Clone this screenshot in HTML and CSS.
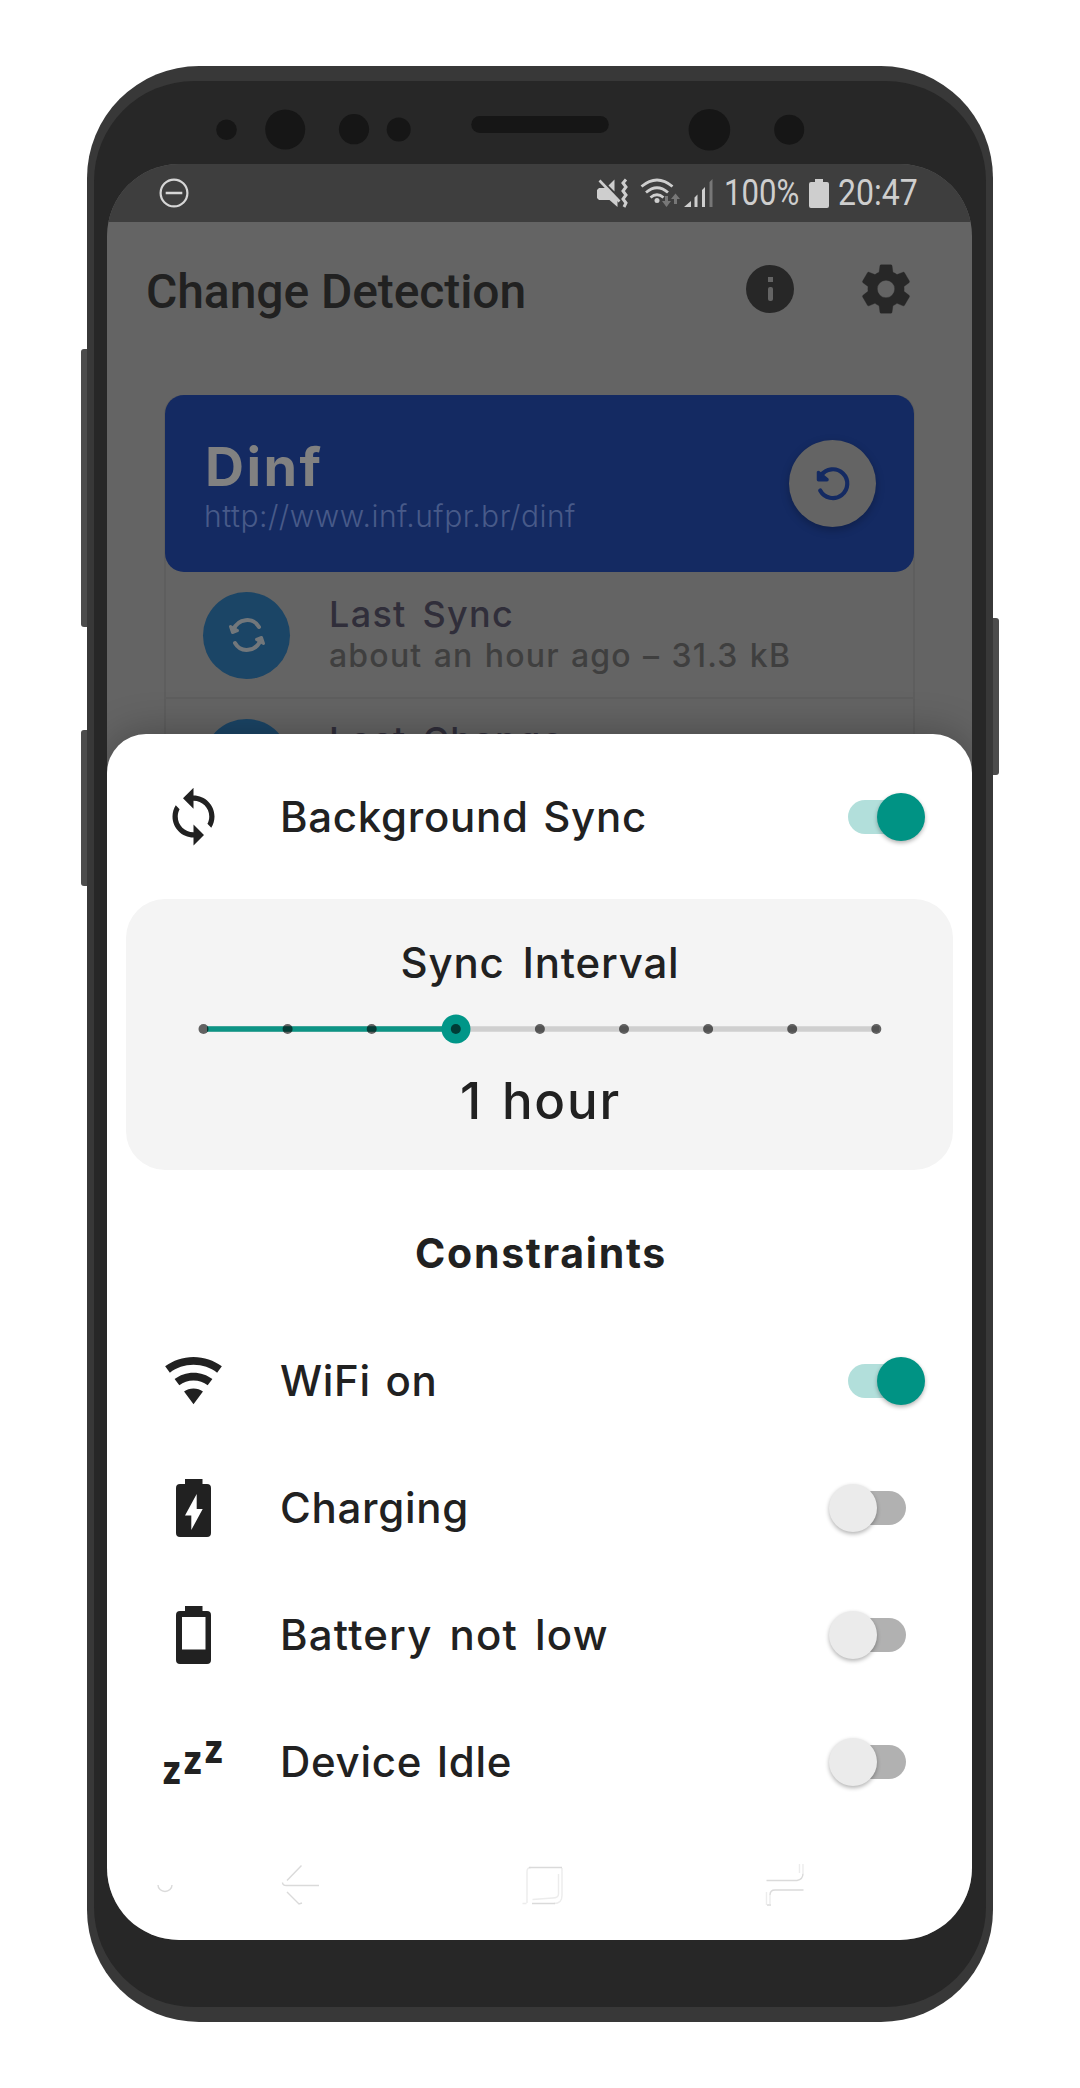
FILE: index.html
```
<!DOCTYPE html>
<html lang="en">
<head>
<meta charset="utf-8">
<title>Change Detection</title>
<link rel="stylesheet" href="styles.css">
</head>
<body>
<div class="phone">
  <i class="side-key volume"></i>
  <i class="side-key assistant"></i>
  <i class="side-key power"></i>
  <div class="bezel">
    <svg class="sensors" width="892" height="83" viewBox="94 81 892 83" fill="#161616">
      <circle cx="226.5" cy="129.7" r="10.3"/><circle cx="285.2" cy="129.5" r="20"/>
      <circle cx="354" cy="129.2" r="15.1"/><circle cx="398.7" cy="129.5" r="12"/>
      <rect x="471.3" y="116" width="137.5" height="17" rx="8.5"/>
      <circle cx="709.4" cy="129.7" r="20.8"/><circle cx="789.2" cy="129.7" r="15"/>
    </svg>
    <div class="screen">
      <header class="status">
        <svg class="dnd" width="30" height="30" viewBox="0 0 30 30" fill="none" stroke="#d6d6d6"><circle cx="15" cy="15" r="13.4" stroke-width="2.2"/><path d="M6.7 15h16.6" stroke-width="2.6"/></svg>
        <svg width="120" height="32" viewBox="0 0 120 32">
          <g fill="#cecece">
            <path d="M1 13l2-2h7L21.500 23v7l-8-7H3l-2-2z"/>
            <path d="M12.500 8.500l6-6v12z"/>
            <path d="M3.500 3.500l20 21" stroke="#cecece" stroke-width="2.600"/>
            <path d="M30 2.500l-3 3.500 3 4-3 4 3 4-3 4 3 4-2 4" fill="none" stroke="#cecece" stroke-width="3"/>
          </g>
          <g fill="none" stroke="#cecece" stroke-width="2.800">
            <path d="M45.500 9.500q15.500-13 31 0"/><path d="M50 15.500q11-9.500 22 0"/><path d="M54.500 20.500q6.500-5.500 13 0"/>
          </g>
          <circle cx="61" cy="23.500" r="2.500" fill="#cecece"/>
          <path d="M69 19v5h-3l4.500 6 4.500-6h-3v-5zM78 27v-5h-3l4.500-5.500 4.500 5.500h-3v5z" fill="#777"/>
          <path d="M88 30l7-6v6zM98.500 20.500l3-3V30h-3zM106 13l3-3v20h-3z" fill="#cecece"/>
          <path d="M113.500 5l3-3v28h-3z" fill="#777"/>
        </svg>
        <span class="percent">100%</span>
        <svg class="cell" width="20" height="29" viewBox="0 0 20 29"><path d="M6 0h8v3h4a2 2 0 0 1 2 2v22a2 2 0 0 1-2 2H2a2 2 0 0 1-2-2V5a2 2 0 0 1 2-2h4z" fill="#cecece"/></svg>
        <span class="clock">20:47</span>
      </header>

      <div class="toolbar">
        <h1>Change Detection</h1>
        <svg width="48" height="48" viewBox="0 0 48 48"><circle cx="24" cy="24" r="24" fill="#272727"/><path d="M22 12h5v5h-5z" fill="#646464"/><rect x="22" y="22" width="5" height="14" rx="2" fill="#646464"/></svg>
        <svg width="58" height="58" viewBox="0 0 24 24" fill="#272727" stroke="#272727" stroke-width=".15"><path fill-rule="evenodd" d="M12 15.600A3.600 3.600 0 0 1 12 8.400a3.600 3.600 0 0 1 0 7.200zM19.430 12.970c.04-.32.07-.64.07-.97s-.03-.66-.07-1l2.110-1.630c.19-.15.24-.42.12-.64l-2-3.460c-.12-.22-.39-.31-.61-.22l-2.490 1c-.52-.39-1.060-.73-1.690-.98l-.37-2.650C14.460 2.180 14.250 2 14 2h-4c-.25 0-.46.18-.5.420l-.37 2.650c-.63.25-1.170.59-1.690.98l-2.490-1c-.22-.09-.49 0-.61.22l-2 3.460c-.13.22-.07.49.12.64L4.570 11c-.04.34-.07.67-.07 1s.03.650.07.970l-2.110 1.660c-.19.15-.25.42-.12.640l2 3.460c.12.22.39.3.61.22l2.490-1.010c.52.4 1.060.74 1.690.99l.37 2.650c.04.24.25.42.5.420h4c.25 0 .46-.18.5-.42l.37-2.650c.63-.26 1.170-.59 1.690-.99l2.490 1.010c.22.080.49 0 .61-.22l2-3.460c.12-.22.07-.49-.12-.64z"/></svg>
      </div>

      <main class="card">
        <section class="site">
          <div>
            <h2>Dinf</h2>
            <p>http://www.inf.ufpr.br/dinf</p>
          </div>
          <button class="reload" aria-label="Reload"><svg width="44" height="44" viewBox="-22 -22 44 44" fill="none" stroke="#142a62" stroke-width="4.200" stroke-linecap="round"><path d="M-12 -8.500A14.400 14.400 0 1 1 -12.800 6.500"/><path d="M-14.500 -11.500v7.200h8.500z" fill="#142a62" stroke-width="3.500" stroke-linejoin="round"/></svg></button>
        </section>
        <section class="entry">
          <span class="badge"><svg width="44" height="44" viewBox="-22 -22 44 44" fill="none" stroke="#72777b" stroke-width="4" stroke-linecap="round"><g><path d="M-13.500 -5.500C-9 -16.500 6 -18.500 12 -8"/><path d="M-16.500 -8.500L-14.500 -2.500L-9.500 -4.500z" fill="#72777b" stroke-width="3" stroke-linejoin="round"/></g><g transform="rotate(180)"><path d="M-13.500 -5.500C-9 -16.500 6 -18.500 12 -8"/><path d="M-16.500 -8.500L-14.500 -2.500L-9.500 -4.500z" fill="#72777b" stroke-width="3" stroke-linejoin="round"/></g></svg></span>
          <div>
            <h3>Last Sync</h3>
            <p>about an hour ago – 31.3 kB</p>
          </div>
        </section>
        <section class="entry">
          <span class="badge"></span>
          <div><h3>Last Change</h3></div>
        </section>
      </main>

      <div class="sheet">
        <div class="row first">
          <span class="icon"><svg width="63" height="63" viewBox="0 0 24 24"><path d="M12 4V1L8 5l4 4V6c3.310 0 6 2.690 6 6 0 1.010-.25 1.970-.7 2.800l1.460 1.460C19.540 15.030 20 13.570 20 12c0-4.420-3.580-8-8-8zm0 14c-3.310 0-6-2.690-6-6 0-1.010.25-1.970.7-2.800L5.240 7.740C4.460 8.970 4 10.430 4 12c0 4.420 3.580 8 8 8v3l4-4-4-4v3z"/></svg></span>
          <span class="label">Background Sync</span>
          <span class="switch on"></span>
        </div>
        <div class="interval">
          <div class="caption">Sync Interval</div>
          <svg class="slider" width="710" height="30" viewBox="0 0 710 30">
            <path d="M22 15h672" stroke="#cfcfcf" stroke-width="5.500"/>
            <path d="M22 15h252" stroke="#0d9485" stroke-width="5.500"/>
            <circle cx="271" cy="15" r="14.500" fill="#009688"/>
            <g fill="#000" fill-opacity=".6"><circle cx="18.500" cy="15" r="5"/><circle cx="102.600" cy="15" r="5"/><circle cx="186.700" cy="15" r="5"/><circle cx="270.800" cy="15" r="5"/><circle cx="354.900" cy="15" r="5"/><circle cx="439" cy="15" r="5"/><circle cx="523.100" cy="15" r="5"/><circle cx="607.200" cy="15" r="5"/><circle cx="691.300" cy="15" r="5"/></g>
          </svg>
          <div class="value">1 hour</div>
        </div>
        <h4>Constraints</h4>
        <div class="row">
          <span class="icon"><svg width="63" height="63" viewBox="0 0 24 24"><path d="M12 21l3.600-4.800C14.600 15.450 13.350 15 12 15s-2.600.45-3.600 1.200zM12 3C7.950 3 4.210 4.340 1.200 6.600L3 9c2.500-1.880 5.620-3 9-3s6.500 1.120 9 3l1.800-2.400C19.790 4.340 16.050 3 12 3m0 6c-2.700 0-5.190.89-7.200 2.400l1.800 2.400C8.100 12.670 9.970 12 12 12s3.900.67 5.400 1.800l1.800-2.400C17.190 9.890 14.700 9 12 9"/></svg></span>
          <span class="label">WiFi on</span>
          <span class="switch on"></span>
        </div>
        <div class="row">
          <span class="icon"><svg width="35" height="58" viewBox="0 0 35 58"><path fill-rule="evenodd" d="M9 0h17.500v5H31a4 4 0 0 1 4 4v45a4 4 0 0 1-4 4H4a4 4 0 0 1-4-4V9a4 4 0 0 1 4-4h5zM20.700 15L9 36.500h6.300V51l11.400-21h-6z"/></svg></span>
          <span class="label">Charging</span>
          <span class="switch"></span>
        </div>
        <div class="row">
          <span class="icon"><svg width="35" height="58" viewBox="0 0 35 58"><path fill-rule="evenodd" d="M9 0h17.500v5H31a4 4 0 0 1 4 4v45a4 4 0 0 1-4 4H4a4 4 0 0 1-4-4V9a4 4 0 0 1 4-4h5zM6 11v32.500h23.500V11z"/></svg></span>
          <span class="label wide">Battery not low</span>
          <span class="switch"></span>
        </div>
        <div class="row">
          <span class="icon snooze"><b>z</b><b>z</b><b>z</b></span>
          <span class="label">Device Idle</span>
          <span class="switch"></span>
        </div>
        <svg class="nav" width="865" height="60" viewBox="107 1855 865 60" fill="none" stroke="#dadada" stroke-width="1.400">
          <path d="M158 1885a7 6.500 0 0 0 14 0"/>
          <path d="M301.500 1865.500L287 1880.500M282.500 1882.500q0 3 4 3H319M287 1892l12 12 3-1"/>
          <path d="M526.500 1903.500h-4M527 1903V1871.500q0-4 4-4M554 1903.500q8 0 8-8V1868M558.500 1874v20q0 4-6 4l-20 1.500" stroke="#ececec"/>
          <path d="M562 1867.500H529M532 1903.500h23"/>
          <path d="M766.500 1880.500H797q6-1 6-7M803.500 1890H775q-5 0-5 5M771 1905h-4"/>
          <path d="M803 1873.500V1864M799.500 1873V1864M770 1895v9M766.500 1892v13" stroke="#ececec"/>
        </svg>
      </div>
    </div>
  </div>
</div>
</body>
</html>
```
FILE: styles.css
```
* { box-sizing: border-box; margin: 0; }
body {
  width: 1080px;
  height: 2088px;
  padding: 66px 87px;
  background: #fff;
  font-family: Inter, "Liberation Sans", sans-serif;
  color: #212121;
  overflow: hidden;
}
svg { display: block; flex: none; }

.phone {
  position: relative;
  height: 1956px;
  padding: 15px 7px;
  border-radius: 112px;
  background: #383838;
}
.bezel {
  height: 1926px;
  border-radius: 100px;
  background: #272727;
}
.side-key {
  position: absolute;
  width: 6px;
  background: #4c4c4c;
  border-radius: 3px 0 0 3px;
}
.volume { left: -6px; top: 283px; height: 278px; }
.assistant { left: -6px; top: 664px; height: 156px; }
.power { right: -6px; top: 552px; height: 157px; border-radius: 0 3px 3px 0; }

.screen {
  position: relative;
  width: 865px;
  height: 1776px;
  margin-left: 13px;
  border-radius: 72px;
  overflow: hidden;
  background: #646464;
}

.status {
  display: flex;
  align-items: center;
  height: 58px;
  padding: 0 54px 0 52px;
  background: #3e3e3e;
  color: #cecece;
  font: 400 36px/58px Roboto, sans-serif;
}
.dnd { margin-right: 407px; }
.status span { display: block; flex: none; transform-origin: 0 50%; white-space: nowrap; }
.percent { width: 77px; margin-left: 8px; transform: scaleX(.865); }
.cell { margin: 0 9px 0 8px; }
.clock { width: 80px; transform: scaleX(.89); }

.toolbar {
  display: flex;
  align-items: center;
  height: 134px;
  padding: 0 57.500px 0 39px;
}
.toolbar h1 {
  flex: 1;
  font: 500 48px/56px Roboto, sans-serif;
  letter-spacing: -.08px;
  color: #212121;
  padding-top: 5px;
}
.toolbar svg:last-child { margin-left: 63px; }

.card {
  margin: 39px 57px 0 57px;
  border: 2px solid #5e5e5e;
  border-top: 0;
  border-radius: 19px 19px 0 0;
}
.site {
  display: flex;
  align-items: center;
  justify-content: space-between;
  height: 177px;
  margin: 0 -1px;
  padding: 0 38px 0 39px;
  border-radius: 19px;
  background: #142a62;
}
.site h2 { font-size: 54px; line-height: 60px; letter-spacing: 2.400px; color: #818181; padding: 4px 0 0 1px; }
.site p { font-size: 30px; line-height: 36px; font-weight: 300; letter-spacing: .5px; color: #485a89; padding-top: 1px; }
.reload {
  display: grid;
  place-items: center;
  width: 87px;
  height: 87px;
  padding: 0;
  border: 0;
  border-radius: 50%;
  background: #646464;
  box-shadow: 0 3px 9px rgba(0, 0, 0, .25);
}
.entry {
  display: flex;
  align-items: center;
  gap: 39px;
  height: 127px;
  padding: 1px 0 0 37px;
  border-bottom: 2px solid #5e5e5e;
}
.badge {
  display: grid;
  place-items: center;
  width: 87px;
  height: 87px;
  border-radius: 50%;
  background: #1b4566;
}
.entry h3 { font-size: 36px; line-height: 42px; font-weight: 500; letter-spacing: 1.300px; word-spacing: 5px; color: #302e3a; }
.entry p { font-size: 32px; line-height: 42px; font-weight: 500; letter-spacing: 1.200px; word-spacing: 1.500px; color: #3f3f3f; }
.entry:last-child { align-items: flex-start; padding-top: 20px; }

.sheet {
  position: absolute;
  inset: 570px 0 0;
  border-radius: 39px 39px 0 0;
  background: #fff;
  box-shadow: 0 0 40px rgba(0, 0, 0, .3);
}
.row {
  display: flex;
  align-items: center;
  height: 127.200px;
  padding: 0 47px 0 55px;
}
.row.first { height: 165px; }
.icon { display: grid; place-items: center; width: 63px; margin-right: 55px; fill: #212121; }
.label { flex: 1; font-size: 42px; font-weight: 500; line-height: 48px; letter-spacing: .700px; word-spacing: 2.800px; }
.label.wide { letter-spacing: 1.200px; word-spacing: 4.600px; }

.switch {
  display: flex;
  align-items: center;
  width: 77px;
  height: 34px;
  margin-right: 19px;
  border-radius: 17px;
  background: linear-gradient(#b1b1b1, #b1b1b1) no-repeat 20px 0 / 57px 34px;
}
.switch::before {
  content: "";
  flex: none;
  width: 48px;
  height: 48px;
  border-radius: 50%;
  background: #ebebeb;
  box-shadow: 0 2px 4px rgba(0, 0, 0, .3);
}
.switch.on {
  justify-content: flex-end;
  margin-right: 0;
  background: linear-gradient(#b2dfdb, #b2dfdb) no-repeat 0 0 / 57px 34px;
}
.switch.on::before { background: #009384; }

.snooze {
  display: flex;
  align-items: baseline;
  gap: 2.500px;
  font: 800 39px/48px "Noto Sans", sans-serif;
}
.snooze b { width: 18.500px; font-weight: 800; transform: scaleX(.92); margin-top: 14px; }
.snooze b:nth-child(2) { transform: translateY(-10.500px) scaleX(.92); }
.snooze b:nth-child(3) { transform: translateY(-21px) scaleX(.92); }

.interval {
  display: flex;
  flex-direction: column;
  align-items: center;
  height: 271px;
  margin: 0 19px;
  padding-top: 40px;
  border-radius: 39px;
  background: #f4f4f4;
}
.caption { font-size: 42px; font-weight: 500; line-height: 48px; letter-spacing: .800px; word-spacing: 6px; padding-left: 1px; }
.slider { margin-top: 27px; }
.value { margin-top: 25px; font-size: 51px; font-weight: 500; line-height: 64px; letter-spacing: 1.800px; word-spacing: 3.500px; padding-left: 2px; }
.sheet h4 {
  margin: 59px 0 38px;
  padding-left: 3px;
  font-size: 41px;
  font-weight: 650;
  line-height: 48px;
  padding-bottom: 2px;
  letter-spacing: 1.700px;
  text-align: center;
}
.nav { margin-top: 29px; }
```
